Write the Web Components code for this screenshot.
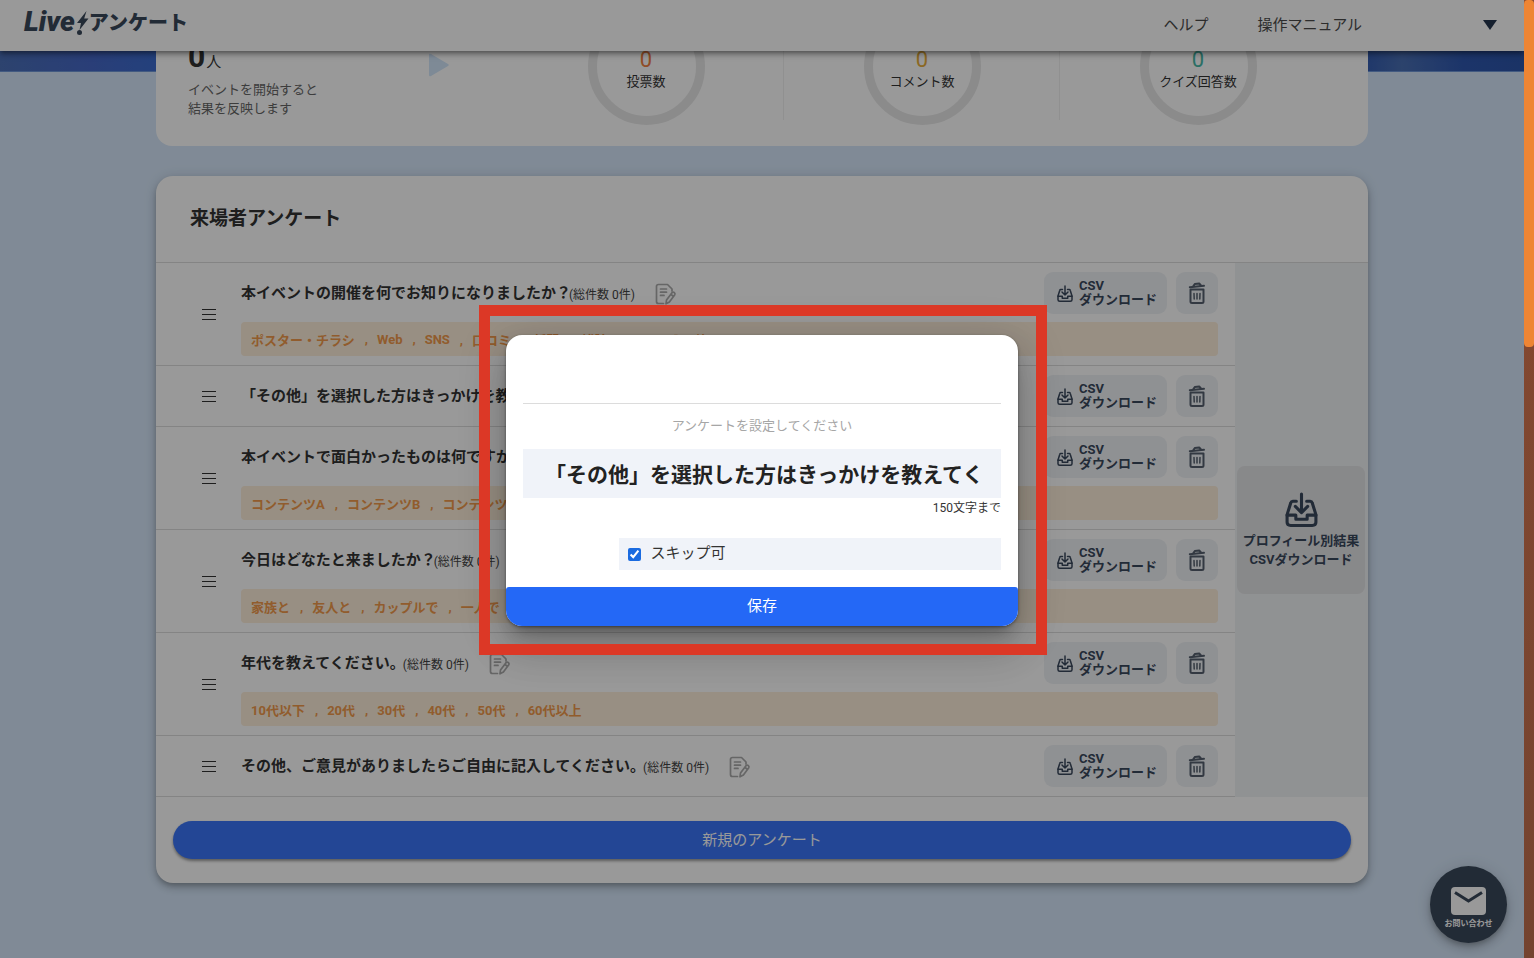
<!DOCTYPE html>
<html lang="ja">
<head>
<meta charset="utf-8">
<title>Live!アンケート</title>
<style>
html,body{margin:0;height:100%}
body{font-family:Roboto,"Noto Sans CJK JP",sans-serif;color:#333;background:#d6e7fa}
</style>
</head>
<body>
<live-app></live-app>
<script>
const define=(name,html,setup)=>{
  const t=document.createElement('template');
  t.innerHTML=html;
  customElements.define(name,class extends HTMLElement{
    constructor(){
      super();
      this.attachShadow({mode:'open'}).append(t.content.cloneNode(true));
    }
    connectedCallback(){ if(setup) setup(this,this.shadowRoot); }
  });
};
const tray=`<svg viewBox="0 0 32 34" fill="none" stroke="currentColor" stroke-width="var(--line,3)" stroke-linecap="round" stroke-linejoin="round" aria-hidden="true"><path d="M16 2v18M10 14l6 6 6-6"/><path d="M11 9H7.500Q6 9 5.600 10.500L2 22v7.500Q2 32.500 5.500 32.500h21Q30 32.500 30 29.500V22L26.400 10.500Q26 9 24.500 9H21"/><path d="M2 22.500h8.500v4h11v-4H30"/></svg>`;

define('live-logo',`<style>
:host{display:block;color:#3a485a}
a{display:flex;align-items:center;color:inherit;text-decoration:none;white-space:nowrap}
b{font:italic 900 28px/32px Roboto,sans-serif}
svg{width:13px;height:24px;margin-top:2px;margin-left:1px;fill:currentColor}
span{font:900 20px/32px "Noto Sans CJK JP",sans-serif}
</style><a href="#"><b>Live</b><svg viewBox="0 0 13 24" aria-hidden="true"><path d="M10.500 0L1 12h4L3.500 19 12.500 7.500H8.200z"/><circle cx="3.500" cy="21.500" r="2.500"/></svg><span>アンケート</span></a>`);

define('app-header',`<style>
:host{display:flex;align-items:center;justify-content:space-between;box-sizing:border-box;height:51px;padding:0 27px 8px 24px;background:#fff;box-shadow:0 2px 4px -1px rgba(0,0,0,.3),0 4px 5px rgba(0,0,0,.2),0 1px 10px rgba(0,0,0,.14);position:absolute;top:0;left:0;right:0;z-index:2}
nav{display:flex;align-items:center;margin-top:6px;font-size:15px;line-height:22px}
a{color:#4a4a4a;text-decoration:none}
a+a{margin-left:49px}
button{margin:0 0 0 121px;padding:0;border:0;background:none;width:14px;height:10px;color:#26364f}
svg{display:block;width:14px;height:10px;fill:currentColor}
</style><live-logo></live-logo><nav><a href="#help">ヘルプ</a><a href="#manual">操作マニュアル</a><button aria-label="メニュー"><svg viewBox="0 0 14 10"><path d="M0 0h14L7 10z"/></svg></button></nav>`);

define('count-ring',`<style>
:host{display:flex;flex:1;justify-content:center;border-right:1px solid #f1f1f1;padding-left:1px}
:host(:last-child){border-color:transparent}
div{box-sizing:border-box;width:117px;height:117px;border:9px solid #e8e8e8;border-radius:50%;display:flex;flex-direction:column;align-items:center;justify-content:center;padding-top:6px;margin-bottom:-5px}
b{font-weight:400;font-size:22px;line-height:24px;color:var(--tone)}
span{font-size:13px;line-height:20px;white-space:nowrap;color:#333}
</style><div><b><slot name="count"></slot></b><span><slot></slot></span></div>`);

define('stats-card',`<style>
:host{display:flex;align-items:flex-end;box-sizing:border-box;height:146px;padding:0 32px 26px;background:#fff;border-radius:0 0 16px 16px}
.people{width:320px;flex:none;display:flex;align-items:center;justify-content:space-between;box-sizing:border-box;padding:0 59px 2px 0}
p{margin:0;font-size:13px;line-height:19px;color:#666}
.num{color:#333;font-size:15px;line-height:36px}
.num b{font-size:30px;margin-right:1px}
.play{width:20px;height:24px;margin-bottom:28px;fill:#d2e6fa}
.rings{display:flex;flex:1}
</style><div class="people"><div><p class="num"><b>0</b>人</p><p>イベントを開始すると<br>結果を反映します</p></div><svg class="play" viewBox="0 0 20 24"><path d="M0 2Q0 0 2 1L19 11q1.500 1 0 2L2 23q-2 1-2-1z"/></svg></div>
<div class="rings"><count-ring style="--tone:#f08040"><span slot="count">0</span>投票数</count-ring><count-ring style="--tone:#e8ae3c"><span slot="count">0</span>コメント数</count-ring><count-ring style="--tone:#48baa8"><span slot="count">0</span>クイズ回答数</count-ring></div>`);

define('csv-button',`<style>
:host{display:block}
button{box-sizing:border-box;display:flex;align-items:center;gap:6px;width:123px;height:42px;padding:0 0 0 13px;border:0;border-radius:9px;background:#eff2f6;color:#3a485c;font:bold 13px/14px Roboto,"Noto Sans CJK JP",sans-serif;text-align:left;white-space:nowrap}
svg{width:16px;height:17px;flex:none}
</style><button>${tray}<span>CSV<br>ダウンロード</span></button>`);

define('trash-button',`<style>
:host{display:block}
button{display:grid;place-items:center;width:42px;height:42px;padding:0;border:0;border-radius:9px;background:#eff2f6;color:#55606e}
svg{width:18px;height:22px}
</style><button aria-label="削除"><svg viewBox="0 0 18 22" fill="none" stroke="currentColor" stroke-width="2" stroke-linecap="round" stroke-linejoin="round"><path d="M2.500 7.500h13v12q0 1.500-1.500 1.500H4q-1.500 0-1.500-1.500z"/><path d="M1.800 5.200L16 3.800M5 4.500L6.800 2l4.400-.5 2 2.200"/><path d="M6 11.500l.2 5.500M9 11.500V17M12 11.500l-.2 5.500" stroke-width="1.500"/></svg></button>`);

define('survey-item',`<style>
:host{display:grid;grid-template-columns:52px 1fr;align-items:center;box-sizing:border-box;padding:9px 17px 9px 33px;border-bottom:1px solid #dcdcdc}
.grip{display:grid;gap:4px;width:14px;justify-self:start;padding:0;margin-left:13px;border:0;background:none}
.grip i{display:block;height:1px;background:#333}
.line{display:flex;align-items:center;height:42px;white-space:nowrap}
h3{margin:0;font-size:15px;line-height:22px;color:#333}
small{font-size:12px;line-height:22px;color:#444;margin-left:-2px;padding-top:3px}
.edit{padding:0;border:0;background:none;width:22px;height:22px;margin:2px auto 0 20px;color:#aaa}
.edit svg{display:block;width:22px;height:22px}
csv-button{margin-right:9px}
.tags{display:flex;align-items:center;box-sizing:border-box;height:34px;margin:8px 0 0;padding:0 10px;border-radius:4px;background:#fdeeda;color:#f29a4b;font-size:13px;font-weight:bold;list-style:none;white-space:nowrap}
.tags li+li::before{content:",";margin:0 9px 0 10px}
.tags:empty{display:none}
</style><button class="grip" aria-label="並べ替え"><i></i><i></i><i></i></button><div><div class="line"><h3><slot></slot></h3><small>(総件数 0件)</small><button class="edit" aria-label="編集"><svg viewBox="0 0 22 22" fill="none" stroke="currentColor" stroke-width="1.700" stroke-linecap="round" stroke-linejoin="round"><path d="M8.500 20.500H3.500Q1.500 20.500 1.500 18.500V3.500Q1.500 1.500 3.500 1.500h9L17 6v2"/><path d="M5.500 6h6M5.500 9.200h6M5.500 12.400h3.500"/><path d="M11.500 17L17 9.700q1-1 2.200-.2t.6 2.200L14.400 19l-3.400 1.800zM15.700 11.300l2.700 2"/></svg></button><csv-button></csv-button><trash-button></trash-button></div><ul class="tags"></ul></div>`,
(host,root)=>{
  const list=root.querySelector('ul'),tags=host.getAttribute('options');
  if(tags&&!list.children.length) tags.split(',').forEach(x=>{const li=document.createElement('li');li.textContent=x;list.append(li);});
});

define('profile-download',`<style>
:host{display:flex;align-items:center;justify-content:center;box-sizing:border-box;width:133px;flex:none;background:#f1f3f5}
button{display:flex;flex-direction:column;align-items:center;justify-content:center;width:128px;height:128px;margin-right:1px;padding:0;border:0;border-radius:8px;background:#e3e4e6;color:#3a485c;font:bold 13px/19px Roboto,"Noto Sans CJK JP",sans-serif;white-space:nowrap}
svg{width:33px;height:35px;margin-bottom:4px}
</style><button>${tray}<span>プロフィール別結果<br>CSVダウンロード</span></button>`);

define('survey-card',`<style>
:host{display:block;box-sizing:border-box;padding-bottom:24px;background:#fff;border-radius:17px;box-shadow:0 3px 5px -1px rgba(0,0,0,.2),0 5px 8px rgba(0,0,0,.14),0 1px 14px rgba(0,0,0,.12)}
h2{margin:0;padding:28px 34px;font-size:19px;line-height:30px;color:#333;border-bottom:1px solid #dcdcdc}
.body{display:flex}
.list{flex:1;min-width:0}
.new{display:block;width:calc(100% - 34px);height:38px;margin:24px auto 0;padding:0;border:0;border-radius:19px;background:#3b76f8;color:#fff;font:15px/22px Roboto,"Noto Sans CJK JP",sans-serif;box-shadow:0 2px 3px rgba(0,0,0,.4)}
.foot{border-top:1px solid #dcdcdc;margin-top:-1px}
</style><h2>来場者アンケート</h2><div class="body"><div class="list"><slot></slot></div><profile-download></profile-download></div><div class="foot"><button class="new">新規のアンケート</button></div>`);

define('contact-button',`<style>
:host{position:absolute;right:17px;bottom:15px}
button{display:flex;flex-direction:column;align-items:center;justify-content:center;width:77px;height:77px;padding:7px 0 0;border:0;border-radius:50%;background:#3a485a;color:#fff;font:bold 8px/12px "Noto Sans CJK JP",sans-serif;white-space:nowrap;box-shadow:0 3px 5px -1px rgba(0,0,0,.2),0 6px 10px rgba(0,0,0,.14),0 1px 18px rgba(0,0,0,.12)}
svg{width:35px;height:28px;margin-bottom:2px}
</style><button><svg viewBox="0 0 35 28"><rect width="35" height="28" rx="4" fill="#fff"/><path d="M4 5.500l13.500 8.500L31 5.500" fill="none" stroke="#3a485a" stroke-width="3"/></svg>お問い合わせ</button>`);

define('edit-dialog',`<style>
:host{display:block;width:512px;border-radius:16px;background:#fff;box-shadow:0 11px 15px -7px rgba(0,0,0,.3),0 24px 38px 3px rgba(0,0,0,.14),0 9px 46px 8px rgba(0,0,0,.12),0 1px 3px rgba(0,0,0,.4)}
form{margin:0}
.content{padding:68px 17px 17px;display:flex;flex-direction:column}
hr{width:100%;margin:0;border:0;border-top:1px solid #dcdcdc}
label.hint{padding:12px 0 13px;text-align:center;font-size:13px;line-height:20px;color:#a6a6a6}
input[type=text]{box-sizing:border-box;width:100%;height:49px;padding:0 20px 2px 22px;border:0;border-radius:0;background:#f0f3f9;color:#222;font:bold 21px/30px Roboto,"Noto Sans CJK JP",sans-serif}
.limit{margin:0;text-align:right;font-size:12px;line-height:20px;color:#333}
.skip{display:flex;align-items:center;align-self:flex-end;box-sizing:border-box;width:80%;height:32px;margin-top:20px;padding:0 0 2px 9px;gap:10px;background:#f0f3f9;color:#333;font-size:15px;line-height:22px}
.skip input{width:13px;height:13px;margin:2px 0 0;accent-color:#1a6be0}
.save{display:block;width:100%;height:39px;padding:0 0 2px;border:0;border-radius:3px 3px 16px 16px;background:#2468f6;color:#fff;font:15px/22px Roboto,"Noto Sans CJK JP",sans-serif}
</style><form role="dialog"><div class="content"><hr><label class="hint" for="question">アンケートを設定してください</label><input id="question" type="text" maxlength="150" value="「その他」を選択した方はきっかけを教えてください。"><p class="limit">150文字まで</p><label class="skip"><input type="checkbox" checked>スキップ可</label></div><button class="save" type="button">保存</button></form>`);

define('highlight-frame',`<style>
:host{display:block;position:relative;padding:30px 29px 29px 27px}
:host::after{content:"";position:absolute;inset:0;border:11px solid #dc3826;pointer-events:none}
</style><slot></slot>`);

define('modal-backdrop',`<style>
:host{position:absolute;inset:0;z-index:5;display:grid;place-items:center;padding:2px 0 0 2px;background:rgba(0,0,0,.4)}
</style><slot></slot>`);

define('scroll-rail',`<style>
:host{display:block;width:10px;flex:none;background:linear-gradient(#8a4a30,#74432f)}
div{height:36.2%;background:#ee8534;border-radius:4px}
</style><div></div>`);

define('live-app',`<style>
:host{display:flex;min-height:100vh}
.stage{position:relative;flex:1;min-width:0;overflow:hidden;background:#d6e7fa}
.hero{position:absolute;top:0;left:0;right:0;height:71px;background:linear-gradient(90deg,#4b70b8,#4668c8 6%,#3c6ccf 10%,#2f58b0 89%,#4a70b5 92%,#2f58b0 96%,#2c55aa);border-bottom:1px solid #6f97d8}
main{position:relative;display:grid;gap:30px;padding:0 156px 75px}
</style><div class="stage"><div class="hero"></div><app-header></app-header><main><stats-card></stats-card><survey-card>
<survey-item options="ポスター・チラシ,Web,SNS,口コミ,新聞,雑誌,TV,その他">本イベントの開催を何でお知りになりましたか？</survey-item>
<survey-item>「その他」を選択した方はきっかけを教えてください。</survey-item>
<survey-item options="コンテンツA,コンテンツB,コンテンツC">本イベントで面白かったものは何ですか？</survey-item>
<survey-item options="家族と,友人と,カップルで,一人で">今日はどなたと来ましたか？</survey-item>
<survey-item options="10代以下,20代,30代,40代,50代,60代以上">年代を教えてください。</survey-item>
<survey-item>その他、ご意見がありましたらご自由に記入してください。</survey-item>
</survey-card></main><contact-button></contact-button><modal-backdrop><highlight-frame><edit-dialog></edit-dialog></highlight-frame></modal-backdrop></div><scroll-rail></scroll-rail>`);
</script>
</body>
</html>
